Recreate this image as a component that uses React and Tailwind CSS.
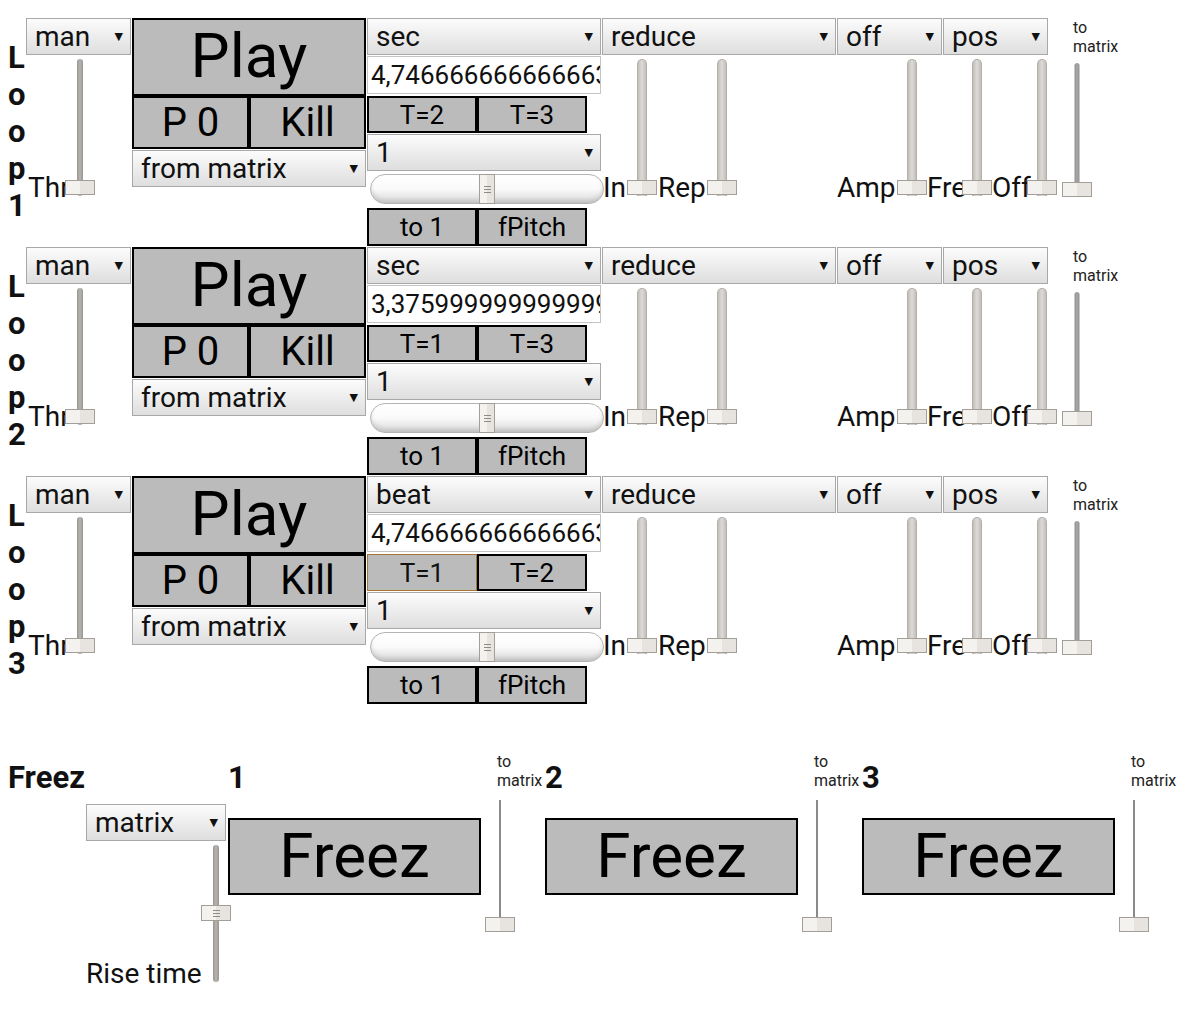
import React from 'react';

function Select({ value, className = '' }) {
  return (
    <div className={`flex h-[37px] shrink-0 items-center justify-between border border-[#a8a8a8] bg-linear-to-b from-[#fcfcfc] to-[#dedede] pl-[8px] pr-[7px] text-[28px] leading-none text-[#111] ${className}`}>
      <span>{value}</span>
      <span className="font-['DejaVu_Sans'] text-[11px]">▼</span>
    </div>
  );
}

function Btn({ children, className = '' }) {
  return (
    <div className={`flex shrink-0 items-center justify-center border-2 border-black bg-[#bbbbbb] leading-none text-black ${className}`}>
      {children}
    </div>
  );
}

function Marks() {
  return (
    <>
      <i className="block h-px w-[7px] bg-[#8e8a86]" />
      <i className="block h-px w-[7px] bg-[#8e8a86]" />
      <i className="block h-px w-[7px] bg-[#8e8a86]" />
    </>
  );
}

const tracks = {
  tube: 'top-0 bottom-0 w-[10px] rounded-t-full border-x border-t border-[#b3afab] bg-[linear-gradient(to_right,#c2beba,#dedad6,#c2beba)]',
  dark: 'top-0 bottom-0 w-[6px] rounded-full bg-[linear-gradient(to_right,#97938f,#b9b5b1,#97938f)]',
  thin: 'top-[3px] bottom-0 w-[5px] rounded-t-full bg-[linear-gradient(to_right,#8f8f8f,#a8a8a8,#8f8f8f)]',
  hair: 'top-0 bottom-0 w-[2px] bg-[#8a8a8a]',
};

function VSlider({ track = 'tube', className = 'h-[137px] mb-[7px]', thumb = 'bottom-[1px]', marks = false }) {
  return (
    <div className={`relative w-[30px] shrink-0 ${className}`}>
      <div className={`absolute left-1/2 -translate-x-1/2 ${tracks[track]}`} />
      <div className={`absolute left-0 flex h-[15px] w-[30px] flex-col items-center justify-center gap-[2px] border border-[#a49e98] bg-[linear-gradient(to_right,#f4f2ef_50%,#e7e3de_50%)] ${thumb}`}>
        {marks && <Marks />}
      </div>
    </div>
  );
}

function Label({ children, className = '' }) {
  return (
    <div className={`shrink-0 whitespace-nowrap text-[28px] leading-[30px] text-[#111] ${className}`}>{children}</div>
  );
}

function ToMatrix({ className = '' }) {
  return (
    <div className={`shrink-0 text-[16px] leading-[19px] text-[#222] ${className}`}>
      to
      <br />
      matrix
    </div>
  );
}

function LoopRow({ n, mode, num, t, focused }) {
  return (
    <div className="flex h-[229px]">
      <div className="w-[26px] shrink-0 pl-[8px] pt-[21px] text-[31px] font-bold leading-[37px] text-[#111]">
        {['L', 'o', 'o', 'p', String(n)].map((c, i) => (
          <div key={i}>{c}</div>
        ))}
      </div>

      <div className="w-[106px] shrink-0">
        <Select value="man" className="w-[105px]" />
        <div className="flex h-[148px] items-end">
          <Label className="w-[39px] pl-[2px]">Thr</Label>
          <VSlider track="dark" />
        </div>
      </div>

      <div className="w-[235px] shrink-0">
        <Btn className="h-[78px] w-[234px] pb-[2px] text-[62px]">Play</Btn>
        <div className="flex">
          <Btn className="h-[53px] w-[117px] text-[40px]">P 0</Btn>
          <Btn className="h-[53px] w-[117px] text-[40px]">Kill</Btn>
        </div>
        <Select value="from matrix" className="mt-[1px] w-[234px]" />
      </div>

      <div className="w-[235px] shrink-0">
        <Select value={mode} className="w-[234px]" />
        <div className="mt-[1px] h-[38px] w-[234px] overflow-hidden whitespace-nowrap border border-[#c4c4c4] bg-white pl-[3px] text-[26px] leading-[36px] text-[#111]">
          {num}
        </div>
        <div className="mt-[2px] flex">
          {focused ? (
            <div className="flex h-[37px] w-[110px] items-center justify-center border border-[#a8762c] bg-[#bbbbbb] text-[26px] leading-none">
              {t[0]}
            </div>
          ) : (
            <Btn className="h-[37px] w-[110px] text-[26px]">{t[0]}</Btn>
          )}
          <Btn className="h-[37px] w-[110px] text-[26px]">{t[1]}</Btn>
        </div>
        <Select value="1" className="mt-px w-[234px]" />
        <div className="relative ml-[3px] mt-[3px] h-[30px] w-[234px] rounded-full border border-[#b4b4b4] bg-linear-to-b from-white via-[#fafafa] to-[#d9d9d9] shadow-[inset_0_-3px_4px_rgba(0,0,0,0.12)]">
          <div className="absolute left-[108px] top-[-1px] flex h-[30px] w-[16px] flex-col items-center justify-center gap-[2px] border border-[#a49e98] bg-[linear-gradient(to_right,#f4f2ef_50%,#e7e3de_50%)]">
            <Marks />
          </div>
        </div>
        <div className="mt-[4px] flex">
          <Btn className="h-[38px] w-[110px] text-[26px]">to 1</Btn>
          <Btn className="h-[38px] w-[110px] text-[26px]">fPitch</Btn>
        </div>
      </div>

      <div className="flex flex-col">
        <div className="flex h-[37px] gap-px">
          <Select value="reduce" className="w-[234px]" />
          <Select value="off" className="w-[105px]" />
          <Select value="pos" className="w-[105px]" />
          <ToMatrix className="ml-[24px]" />
        </div>
        <div className="flex h-[148px] items-end">
          <Label className="w-[25px] pl-[1px]">In</Label>
          <VSlider />
          <Label className="w-[50px] pl-[1px]">Rep</Label>
          <VSlider />
          <Label className="w-[160px] pl-[100px]">Amp</Label>
          <VSlider />
          <Label className="w-[35px]">Fre</Label>
          <VSlider />
          <Label className="w-[35px]">Off</Label>
          <VSlider />
          <div className="w-[5px] shrink-0" />
          <VSlider track="thin" className="h-[137px] mb-[6px]" thumb="bottom-0" />
        </div>
      </div>
    </div>
  );
}

function FreezUnit({ n }) {
  return (
    <div className="flex w-[317px] shrink-0">
      <div className="w-[253px] shrink-0">
        <div className="pt-[8px] text-[31px] font-bold leading-[36px] text-[#111]">{n}</div>
        <Btn className="mt-[22px] h-[77px] w-[253px] pb-[2px] text-[62px]">Freez</Btn>
      </div>
      <div className="shrink-0">
        <ToMatrix className="pl-[16px]" />
        <VSlider track="hair" className="ml-[4px] mt-[10px] h-[132px]" thumb="bottom-0" />
      </div>
    </div>
  );
}

export default function App() {
  return (
    <div className="h-[1018px] w-[1192px] overflow-hidden bg-white pt-[18px] font-['Roboto',sans-serif] text-[#111]">
      <LoopRow n={1} mode="sec" num="4,746666666666663" t={['T=2', 'T=3']} />
      <LoopRow n={2} mode="sec" num="3,3759999999999999" t={['T=1', 'T=3']} />
      <LoopRow n={3} mode="beat" num="4,746666666666663" t={['T=1', 'T=2']} focused />

      <div className="mt-[47px] flex">
        <div className="w-[228px] shrink-0">
          <div className="pl-[8px] pt-[8px] text-[31px] font-bold leading-[36px]">Freez</div>
          <div className="pl-[86px]">
            <Select value="matrix" className="mt-[8px] w-[140px]" />
            <div className="flex h-[148px] items-end">
              <Label className="w-[115px]">Rise time</Label>
              <VSlider track="dark" className="h-[137px] mb-[7px]" thumb="top-[60px] h-[16px]" marks />
            </div>
          </div>
        </div>
        <FreezUnit n={1} />
        <FreezUnit n={2} />
        <FreezUnit n={3} />
      </div>
    </div>
  );
}
